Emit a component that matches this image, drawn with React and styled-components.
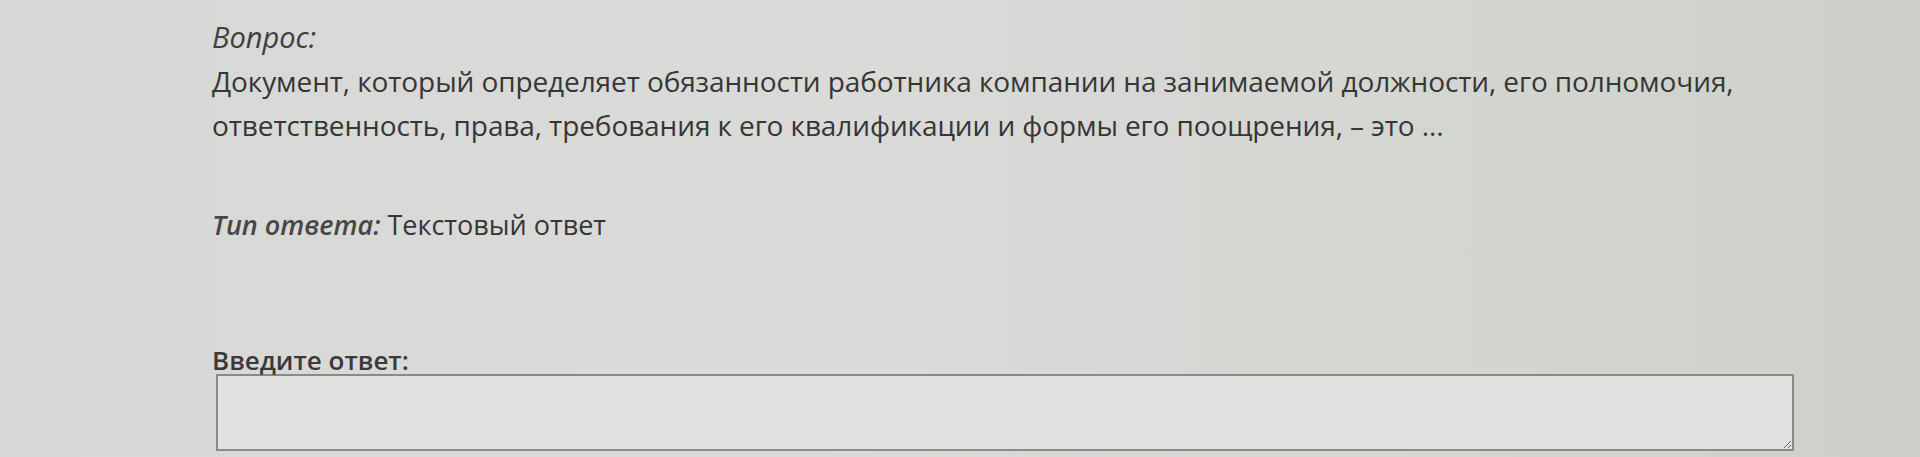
import styled, { createGlobalStyle } from "styled-components";

const GlobalStyle = createGlobalStyle`
  html, body {
    margin: 0;
    padding: 0;
  }
  body {
    background: linear-gradient(90deg, #d8d8d7 0%, #dadad8 45%, #d3d5d0 80%, #cdd0c9 100%);
    font-family: "Open Sans", "Noto Sans", sans-serif;
    color: #363636;
  }
`;

const Page = styled.div`
  width: 1920px;
  height: 457px;
  box-sizing: border-box;
  padding: 15px 0 0 212px;
  overflow: hidden;
`;

const Block = styled.section`
  margin-top: ${(p) => p.$gap || 0}px;
`;

const Label = styled.div`
  font-size: 29px;
  line-height: 44px;
  font-style: italic;
  color: #404040;
`;

const Text = styled.p`
  margin: 0;
  font-size: 28px;
  line-height: 44px;
  letter-spacing: -0.1px;
  color: #363636;
`;

const TypeLine = styled.div`
  font-size: 27px;
  line-height: 44px;
  color: #363636;
`;

const TypeLabel = styled.span`
  font-style: italic;
  font-weight: 600;
  color: #474747;
`;

const AnswerLabel = styled.label`
  display: block;
  font-size: 26px;
  line-height: 26px;
  font-weight: 600;
  color: #3a3a3a;
`;

const Answer = styled.textarea`
  display: block;
  box-sizing: border-box;
  margin: 1px 0 0 4px;
  width: 1578px;
  height: 77px;
  background: #e2e3e0;
  border: 2px solid #8a8b88;
  border-radius: 0;
  font-family: inherit;
  font-size: 20px;
  outline: none;
`;

export default function App() {
  return (
    <>
      <GlobalStyle />
      <Page>
        <Block>
          <Label>Вопрос:</Label>
          <Text>
            Документ, который определяет обязанности работника компании на
            занимаемой должности, его полномочия,
            <br />
            ответственность, права, требования к его квалификации и формы его
            поощрения, – это ...
          </Text>
        </Block>
        <Block $gap={56}>
          <TypeLine>
            <TypeLabel>Тип ответа:</TypeLabel> Текстовый ответ
          </TypeLine>
        </Block>
        <Block $gap={100}>
          <AnswerLabel htmlFor="answer">Введите ответ:</AnswerLabel>
          <Answer id="answer" />
        </Block>
      </Page>
    </>
  );
}
